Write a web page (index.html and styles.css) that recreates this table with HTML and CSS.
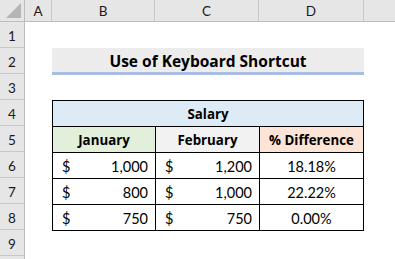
FILE: index.html
```html
<!DOCTYPE html>
<html>
<head>
<meta charset="utf-8">
<link rel="stylesheet" href="styles.css">
</head>
<body>
<div class="sheet">
  <div class="colhead">
    <div class="corner"><span class="tri"></span></div>
    <div class="ch c-a">A</div>
    <div class="ch c-b">B</div>
    <div class="ch c-c">C</div>
    <div class="ch c-d">D</div>
    <div class="ch c-e"></div>
  </div>
  <div class="body">
    <div class="rowhead">
      <div class="rh">1</div><div class="rh">2</div><div class="rh">3</div><div class="rh">4</div><div class="rh">5</div>
      <div class="rh">6</div><div class="rh">7</div><div class="rh">8</div><div class="rh">9</div><div class="rh"></div>
    </div>
    <div class="cells">
      <div class="title">Use of Keyboard Shortcut</div>
      <div class="tbl">
        <div class="hd salary">Salary</div>
        <div class="hd jan">January</div>
        <div class="hd feb">February</div>
        <div class="hd pct">% Difference</div>

        <div class="cur"><span>$</span><span>1,000</span></div>
        <div class="cur"><span>$</span><span>1,200</span></div>
        <div class="pc">18.18%</div>

        <div class="cur"><span>$</span><span>800</span></div>
        <div class="cur"><span>$</span><span>1,000</span></div>
        <div class="pc">22.22%</div>

        <div class="cur"><span>$</span><span>750</span></div>
        <div class="cur"><span>$</span><span>750</span></div>
        <div class="pc">0.00%</div>
      </div>
    </div>
  </div>
</div>
</body>
</html>
```
FILE: styles.css
```css
* { box-sizing: border-box; }
html, body { margin: 0; padding: 0; background: #fff; }
body { font-family: Lato, "Open Sans", "Liberation Sans", sans-serif; color: #000; width: 395px; height: 259px; overflow: hidden; }

.sheet { display: flex; flex-direction: column; width: 395px; height: 259px; overflow: hidden; }

.colhead {
  display: grid;
  grid-template-columns: 25px 27px 103px 104px 105px 1fr;
  height: 22px;
  flex: none;
  background: #e6e6e6;
  border-bottom: 1px solid #bdbdbd;
}
.corner { position: relative; border-right: 1px solid #bdbdbd; }
.tri {
  position: absolute; right: 3px; bottom: 3px;
  width: 0; height: 0;
  border-left: 15px solid transparent;
  border-bottom: 15px solid #b5b5b5;
}
.ch {
  border-right: 1px solid #c8c8c8;
  display: flex; align-items: center; justify-content: center;
  font-size: 13.5px; color: #1a1a1a; padding-top: 1px;
}
.c-e { border-right: none; }

.body { display: flex; }
.rowhead { width: 25px; flex: none; display: flex; flex-direction: column; background: #e6e6e6; border-right: 1px solid #bdbdbd; }
.rh {
  height: 26px; flex: none; border-bottom: 1px solid #c8c8c8;
  display: flex; align-items: center; justify-content: center;
  font-size: 13.5px; color: #1a1a1a; padding-top: 2px;
}

.cells {
  flex: 1;
  display: grid;
  grid-template-columns: 27px 312px 1fr;
  grid-template-rows: 26px 26px 26px 130px;
  align-items: start;
}
.title {
  grid-column: 2; grid-row: 2;
  height: 27px;
  background: #ececec;
  border-bottom: 3px solid #a9bce2;
  font-family: "Open Sans", Lato, sans-serif;
  font-weight: 700; font-size: 15.5px;
  display: flex; align-items: center; justify-content: center;
  padding-top: 1px;
}
.tbl {
  grid-column: 2; grid-row: 4;
  display: grid;
  grid-template-columns: 102px 103px 103px;
  grid-template-rows: repeat(5, 25px);
  gap: 1px;
  background: #000;
  border: 1px solid #000;
  font-size: 14.5px;
}
.tbl > div { background: #fff; display: flex; align-items: center; padding-top: 2px; }
.hd { justify-content: center; font-family: "Open Sans", Lato, sans-serif; font-weight: 700; font-size: 13.3px; padding-top: 1px !important; }
.salary { grid-column: 1 / 4; background: #ddebf7 !important; }
.jan { background: #e2efda !important; }
.feb { background: #f2f2f2 !important; }
.pct { background: #fce4d6 !important; }
.cur { justify-content: space-between; padding: 0 7px 0 9px; }
.pc { justify-content: center; }
```
